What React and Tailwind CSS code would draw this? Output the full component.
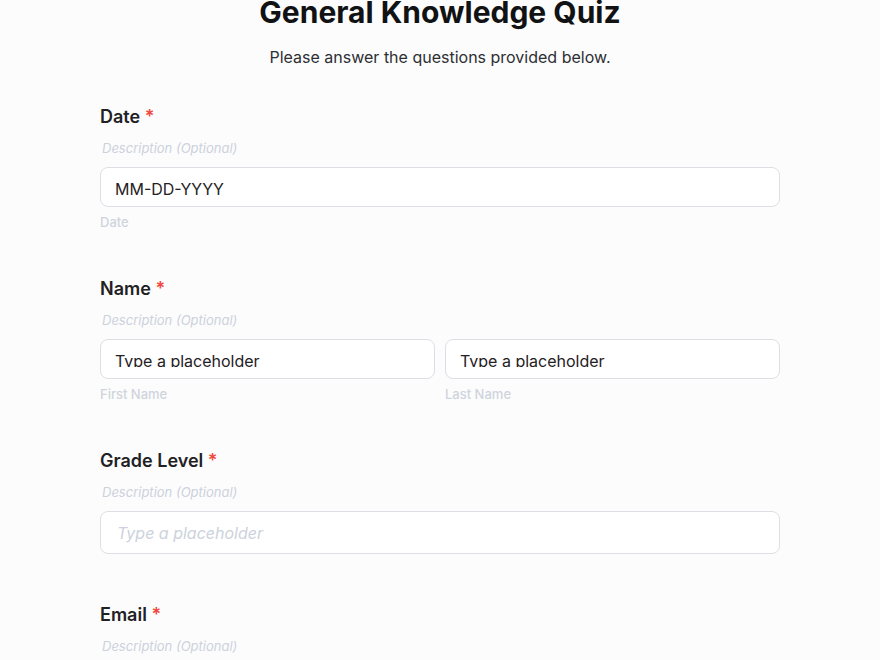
import React from "react";

const Label = ({ children }) => (
  <div className="h-7 text-[18px] leading-7 font-semibold text-[#1f2124]">
    {children} <span className="text-[#f0483e]">*</span>
  </div>
);

const Description = () => (
  <div className="mt-[7px] pl-[2px] text-[13px] leading-5 italic text-[#ccd2dc]">
    Description (Optional)
  </div>
);

// filled box; the text sits low and its descenders get cut, as in the builder
const FilledBox = ({ value }) => (
  <div className="h-[40px] rounded-lg border border-[#dcdfe4] bg-white px-[14px]">
    <div className="mt-[9px] h-[18px] overflow-hidden text-base leading-6 text-[#1f2124]">
      {value}
    </div>
  </div>
);

const SubLabel = ({ children }) => (
  <div className="mt-[6px] text-[13px] leading-[18px] font-medium text-[#cfd4dc]">
    {children}
  </div>
);

const App = () => {
  return (
    <div
      className="min-h-screen bg-[#fcfcfc] pb-20"
      style={{ fontFamily: "Inter, 'Noto Sans', sans-serif" }}
    >
      <div className="mx-auto max-w-[680px] -mt-[6px]">
        <h1 className="text-center text-[30px] leading-9 font-bold text-[#111214]">
          General Knowledge Quiz
        </h1>
        <p className="mt-[15px] text-center text-base leading-6 text-[#2d2f33]">
          Please answer the questions provided below.
        </p>

        {/* Date */}
        <div className="mt-[34px] mb-[44px]">
          <Label>Date</Label>
          <Description />
          <div className="mt-[9px]">
            <FilledBox value="MM-DD-YYYY" />
          </div>
          <SubLabel>Date</SubLabel>
        </div>

        {/* Name */}
        <div className="mb-[44px]">
          <Label>Name</Label>
          <Description />
          <div className="mt-[9px] grid grid-cols-2 gap-[10px]">
            <div>
              <FilledBox value="Type a placeholder" />
              <SubLabel>First Name</SubLabel>
            </div>
            <div>
              <FilledBox value="Type a placeholder" />
              <SubLabel>Last Name</SubLabel>
            </div>
          </div>
        </div>

        {/* Grade level */}
        <div className="mb-[47px]">
          <Label>Grade Level</Label>
          <Description />
          <input
            type="text"
            placeholder="Type a placeholder"
            className="mt-[9px] block h-[43px] w-full rounded-lg border border-[#dcdfe4] bg-white px-4 text-base text-[#1f2124] outline-none placeholder:italic placeholder:text-[#ccd2dc]"
          />
        </div>

        {/* Email */}
        <div>
          <Label>Email</Label>
          <Description />
          <input
            type="email"
            placeholder="Type a placeholder"
            className="mt-[9px] block h-[43px] w-full rounded-lg border border-[#dcdfe4] bg-white px-4 text-base text-[#1f2124] outline-none placeholder:italic placeholder:text-[#ccd2dc]"
          />
        </div>
      </div>
    </div>
  );
};

export default App;
